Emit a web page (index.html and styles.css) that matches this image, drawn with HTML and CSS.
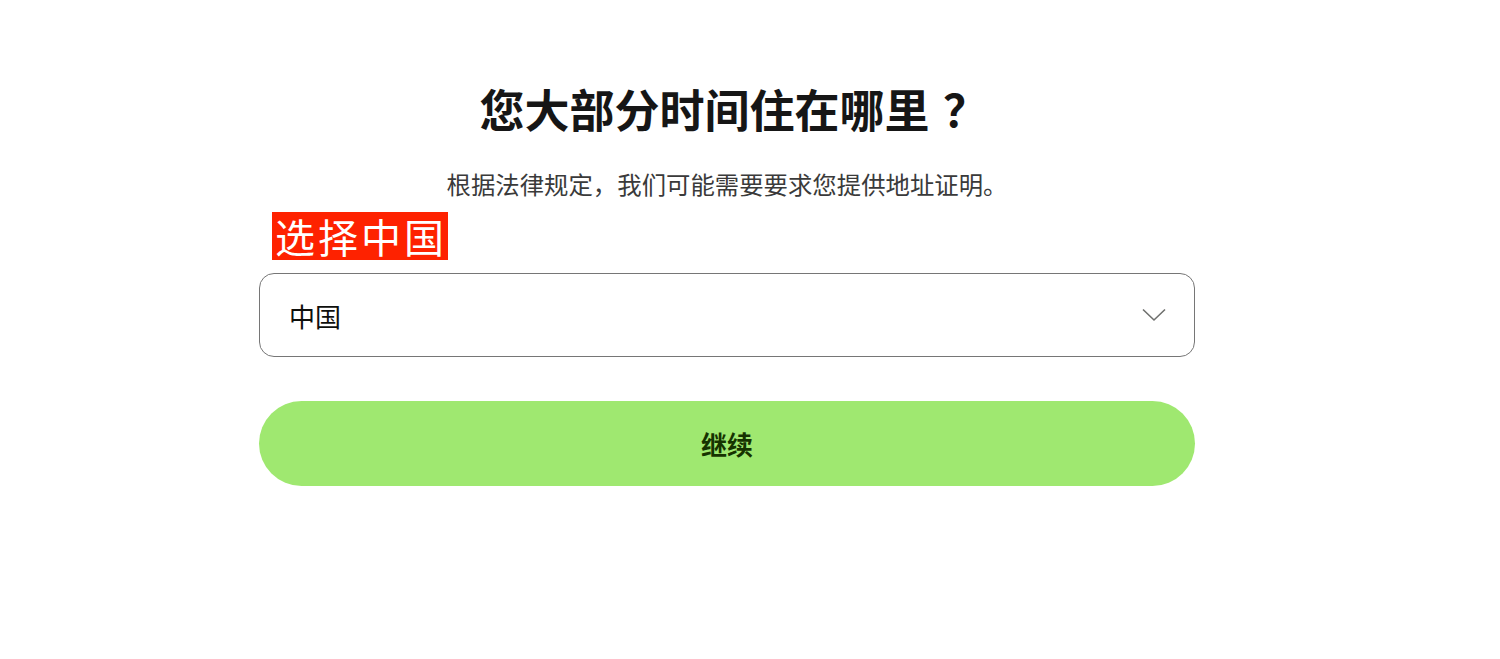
FILE: index.html
```html
<!DOCTYPE html>
<html lang="zh-CN">
<head>
<meta charset="UTF-8">
<meta name="viewport" content="width=device-width, initial-scale=1.0">
<title>您大部分时间住在哪里？</title>
<link rel="stylesheet" href="styles.css">
</head>
<body>

<div class="container">
  <h1>您大部分时间住在哪里<span class="punct question">？</span></h1>
  <p class="subtitle">根据法律规定<span class="punct">，</span>我们可能需要要求您提供地址证明<span class="punct">。</span></p>

  <div class="field">
    <span class="tag">选择中国</span>
    <div class="select">
      <span class="value">中国</span>
      <svg class="chevron" width="24" height="14" viewBox="0 0 24 14">
        <path d="M1 1.5 L12 12 L23 1.5" fill="none" stroke="#6f706e" stroke-width="1.6"/>
      </svg>
    </div>
  </div>

  <button class="continue">继续</button>
</div>

</body>
</html>
```

FILE: styles.css
```css
body {
  font-family: "Noto Sans CJK SC", Inter, sans-serif;
  background-color: #fff;
  color: #0e0f0c;
  margin: 0;
}
.container {
  width: 936px;
  margin-left: 259px;
  padding-top: 82px;
  display: flex;
  flex-direction: column;
}
.punct {
  display: inline-block;
  width: 1em;
  text-align: center;
}
.question {
  box-sizing: border-box;
  padding-left: 0.3em;
  text-align: left;
}
h1 {
  margin: 0;
  text-align: center;
  font-size: 45px;
  line-height: 54px;
  font-weight: 600;
  color: #161616;
}
.subtitle {
  margin: 30px 0 0;
  text-align: center;
  font-size: 24.4px;
  line-height: 36px;
  color: #3a3a3a;
}
.field {
  position: relative;
  margin-top: 71px;
}
.tag {
  position: absolute;
  left: 13px;
  top: -61px;
  background-color: #fe2200;
  color: #fff;
  font-size: 40px;
  line-height: 48px;
  padding: 0 1px 0 3px;
  letter-spacing: 3px;
}
.select {
  height: 82px;
  border: 1px solid #767676;
  border-radius: 15px;
  display: flex;
  align-items: center;
  justify-content: space-between;
  padding: 0 28px 0 29px;
}
.value {
  font-size: 26px;
  color: #0e0f0c;
}
.continue {
  margin-top: 44px;
  height: 85px;
  border: none;
  border-radius: 43px;
  background-color: #9fe870;
  color: #163300;
  font-family: inherit;
  font-size: 26px;
  font-weight: 700;
  cursor: pointer;
}
```
